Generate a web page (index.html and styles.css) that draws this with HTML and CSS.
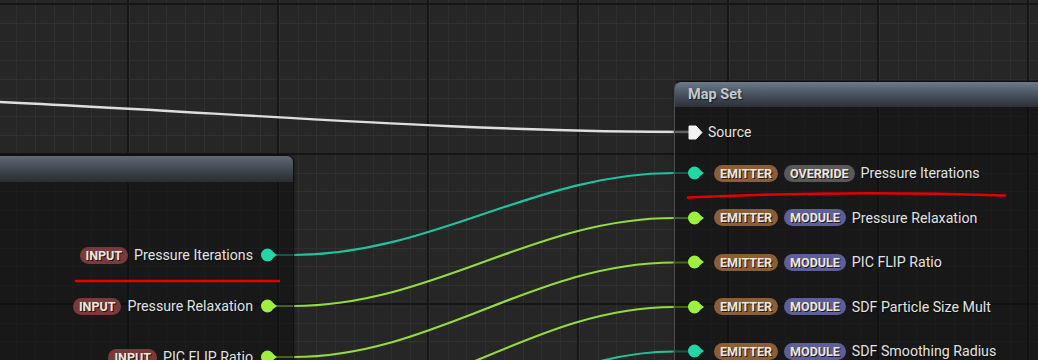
FILE: index.html
```html
<!DOCTYPE html>
<html>
  <head>
    <meta charset="utf-8" />
    <title>Niagara Graph - Map Set</title>
    <link rel="stylesheet" href="styles.css">
  </head>
  <body>
    <div id="graph">
      <!-- wires sit under the nodes -->
      <svg class="wires" width="1038" height="360" viewBox="0 0 1038 360">
        <path class="wire wire-exec" d="M-10,101.5 C224,112 450,132 694,132" />
        <path class="wire wire-teal" d="M267,255 L293,255 C433,255 534,173 674,173 L694,173" />
        <path class="wire wire-green" d="M267,306 L293,306 C433,306 534,218 674,218 L694,218" />
        <path class="wire wire-green" d="M267,357 L293,357 C433,357 534,262.5 674,262.5 L694,262.5" />
        <path class="wire wire-green" d="M267,408 L293,408 C433,408 534,307 674,307 L694,307" />
        <path class="wire wire-teal" d="M267,459 L293,459 C433,459 534,351.5 674,351.5 L694,351.5" />
      </svg>

      <div class="node node-left">
        <div class="node-head"></div>
        <div class="node-body">
          <div class="pin-row">
            <span class="tag tag-input">INPUT</span>
            <span class="pin-name">Pressure Iterations</span>
            <svg class="pin" width="17" height="14" viewBox="0 0 17 14"><circle class="dot-teal" cx="6.5" cy="7" r="6.5"/><polygon class="dot-teal" points="12,4 16,7 12,10"/></svg>
          </div>
          <div class="pin-row">
            <span class="tag tag-input">INPUT</span>
            <span class="pin-name">Pressure Relaxation</span>
            <svg class="pin" width="17" height="14" viewBox="0 0 17 14"><circle class="dot-green" cx="6.5" cy="7" r="6.5"/><polygon class="dot-green" points="12,4 16,7 12,10"/></svg>
          </div>
          <div class="pin-row">
            <span class="tag tag-input">INPUT</span>
            <span class="pin-name">PIC FLIP Ratio</span>
            <svg class="pin" width="17" height="14" viewBox="0 0 17 14"><circle class="dot-green" cx="6.5" cy="7" r="6.5"/><polygon class="dot-green" points="12,4 16,7 12,10"/></svg>
          </div>
        </div>
      </div>

      <div class="node node-right">
        <div class="node-head">Map Set</div>
        <div class="node-body">
          <div class="pin-row exec-row">
            <svg class="pin" width="16" height="15" viewBox="0 0 16 15"><path class="exec" d="M1,1 H8 L14,7.5 L8,14 H1 Z"/></svg>
            <span class="pin-name">Source</span>
          </div>
          <div class="pin-row first-param">
            <svg class="pin" width="17" height="14" viewBox="0 0 17 14"><circle class="dot-teal" cx="6.5" cy="7" r="6.5"/><polygon class="dot-teal" points="12,4 16,7 12,10"/></svg>
            <span class="tag tag-emitter">EMITTER</span>
            <span class="tag tag-override">OVERRIDE</span>
            <span class="pin-name">Pressure Iterations</span>
          </div>
          <div class="pin-row">
            <svg class="pin" width="17" height="14" viewBox="0 0 17 14"><circle class="dot-green" cx="6.5" cy="7" r="6.5"/><polygon class="dot-green" points="12,4 16,7 12,10"/></svg>
            <span class="tag tag-emitter">EMITTER</span>
            <span class="tag tag-module">MODULE</span>
            <span class="pin-name">Pressure Relaxation</span>
          </div>
          <div class="pin-row">
            <svg class="pin" width="17" height="14" viewBox="0 0 17 14"><circle class="dot-green" cx="6.5" cy="7" r="6.5"/><polygon class="dot-green" points="12,4 16,7 12,10"/></svg>
            <span class="tag tag-emitter">EMITTER</span>
            <span class="tag tag-module">MODULE</span>
            <span class="pin-name">PIC FLIP Ratio</span>
          </div>
          <div class="pin-row">
            <svg class="pin" width="17" height="14" viewBox="0 0 17 14"><circle class="dot-green" cx="6.5" cy="7" r="6.5"/><polygon class="dot-green" points="12,4 16,7 12,10"/></svg>
            <span class="tag tag-emitter">EMITTER</span>
            <span class="tag tag-module">MODULE</span>
            <span class="pin-name">SDF Particle Size Mult</span>
          </div>
          <div class="pin-row">
            <svg class="pin" width="17" height="14" viewBox="0 0 17 14"><circle class="dot-teal" cx="6.5" cy="7" r="6.5"/><polygon class="dot-teal" points="12,4 16,7 12,10"/></svg>
            <span class="tag tag-emitter">EMITTER</span>
            <span class="tag tag-module">MODULE</span>
            <span class="pin-name">SDF Smoothing Radius</span>
          </div>
        </div>
      </div>

      <!-- hand drawn red underlines on top of everything -->
      <svg class="marks" width="1038" height="360" viewBox="0 0 1038 360">
        <path d="M688,197.5 Q845,190 1005,195.5" />
        <path d="M76,281 L279,281" />
      </svg>
    </div>
  </body>
</html>
```

FILE: styles.css
```css
/* Niagara graph canvas */
body {
  margin: 0;
  background-color: #262626;
  font-family: Roboto, "Liberation Sans", sans-serif;
}
#graph {
  position: relative;
  width: 1038px;
  height: 360px;
  overflow: hidden;
  background-color: #262626;
  background-image:
    repeating-linear-gradient(90deg, transparent 0 127px, #161616 127px 129px, transparent 129px 150px),
    repeating-linear-gradient(180deg, transparent 0 3px, #161616 3px 5px, transparent 5px 150px),
    repeating-linear-gradient(90deg, transparent 0 16.5px, #303030 16.5px 17.5px, transparent 17.5px 18.75px),
    repeating-linear-gradient(180deg, transparent 0 3.8px, #303030 3.8px 4.8px, transparent 4.8px 18.75px);
}
.wires, .marks {
  position: absolute;
  left: 0;
  top: 0;
}
.wires {
  z-index: 0;
}
.marks {
  z-index: 5;
  pointer-events: none;
}
.marks path {
  fill: none;
  stroke: #e40000;
  stroke-width: 2.5;
  stroke-linecap: round;
}
.wire {
  fill: none;
  stroke-width: 2.2;
}
.wire-exec {
  stroke: #dedede;
  stroke-width: 2.4;
}
.wire-teal {
  stroke: #1fc49e;
}
.wire-green {
  stroke: #93dc3a;
}

/* nodes */
.node {
  position: absolute;
  z-index: 2;
  display: flex;
  flex-direction: column;
  border: 1px solid #0f0f0f;
  border-radius: 7px 7px 0 0;
  box-shadow: 0 0 3px rgba(0, 0, 0, 0.5);
}
.node-left {
  left: -30px;
  top: 155px;
  width: 322px;
  height: 240px;
}
.node-right {
  left: 674px;
  top: 81px;
  width: 420px;
  height: 300px;
  border-left-color: #4a4d52;
}
.node-head {
  height: 25px;
  border-radius: 6px 6px 0 0;
  background: linear-gradient(180deg, #6d7b8b 0%, #535e6b 35%, #394049 75%, #2c3137 100%);
  color: #c3c9cf;
  font-size: 14.5px;
  font-weight: bold;
  line-height: 26px;
  padding-left: 13px;
  text-shadow: 1px 1px 1px rgba(0, 0, 0, 0.6);
}
.node-left .node-head {
  height: 26px;
  background: linear-gradient(180deg, #5f6a76 0%, #4a525c 35%, #343a41 75%, #2a2e33 100%);
}
.node-body {
  flex: 1;
  display: flex;
  flex-direction: column;
  background-color: rgba(14, 15, 14, 0.6);
}
.node-left .node-body {
  align-items: flex-end;
  padding: 64px 15px 0 0;
  gap: 33px;
}
.node-right .node-body {
  padding: 16px 0 0 13px;
  gap: 26.5px;
}

/* pin rows */
.pin-row {
  height: 18px;
  display: flex;
  align-items: center;
  gap: 6px;
}
.node-right .pin-row .pin {
  margin-right: 3px;
}
.node-left .pin-row .pin {
  margin-left: 2px;
}
.exec-row {
  gap: 4px;
}
.node-right .exec-row .pin {
  margin-right: 0;
}
.first-param {
  margin-top: -3.5px;
}
.pin {
  flex: none;
  display: block;
}
.exec {
  fill: #f2f2f2;
  stroke: #f2f2f2;
  stroke-width: 1;
  stroke-linejoin: round;
}
.dot-teal {
  fill: #22d6a8;
}
.dot-green {
  fill: #9ef03e;
}
.pin-name {
  color: #e2e2e2;
  font-size: 14.2px;
  white-space: nowrap;
  text-shadow: 1px 1px 1px rgba(0, 0, 0, 0.5);
}
.exec-row .pin-name {
  font-size: 14px;
}

/* category tags */
.tag {
  height: 17px;
  padding: 0 6px;
  border-radius: 9px;
  color: #ece6df;
  font-size: 12.5px;
  font-weight: bold;
  line-height: 17px;
  white-space: nowrap;
  text-shadow: 1px 1px 0 rgba(0, 0, 0, 0.75);
}
.tag-emitter {
  background-color: #8a5e37;
}
.tag-override {
  background-color: #595959;
}
.tag-module {
  background-color: #5e5e98;
}
.tag-input {
  background-color: #7b3a3a;
}
```
